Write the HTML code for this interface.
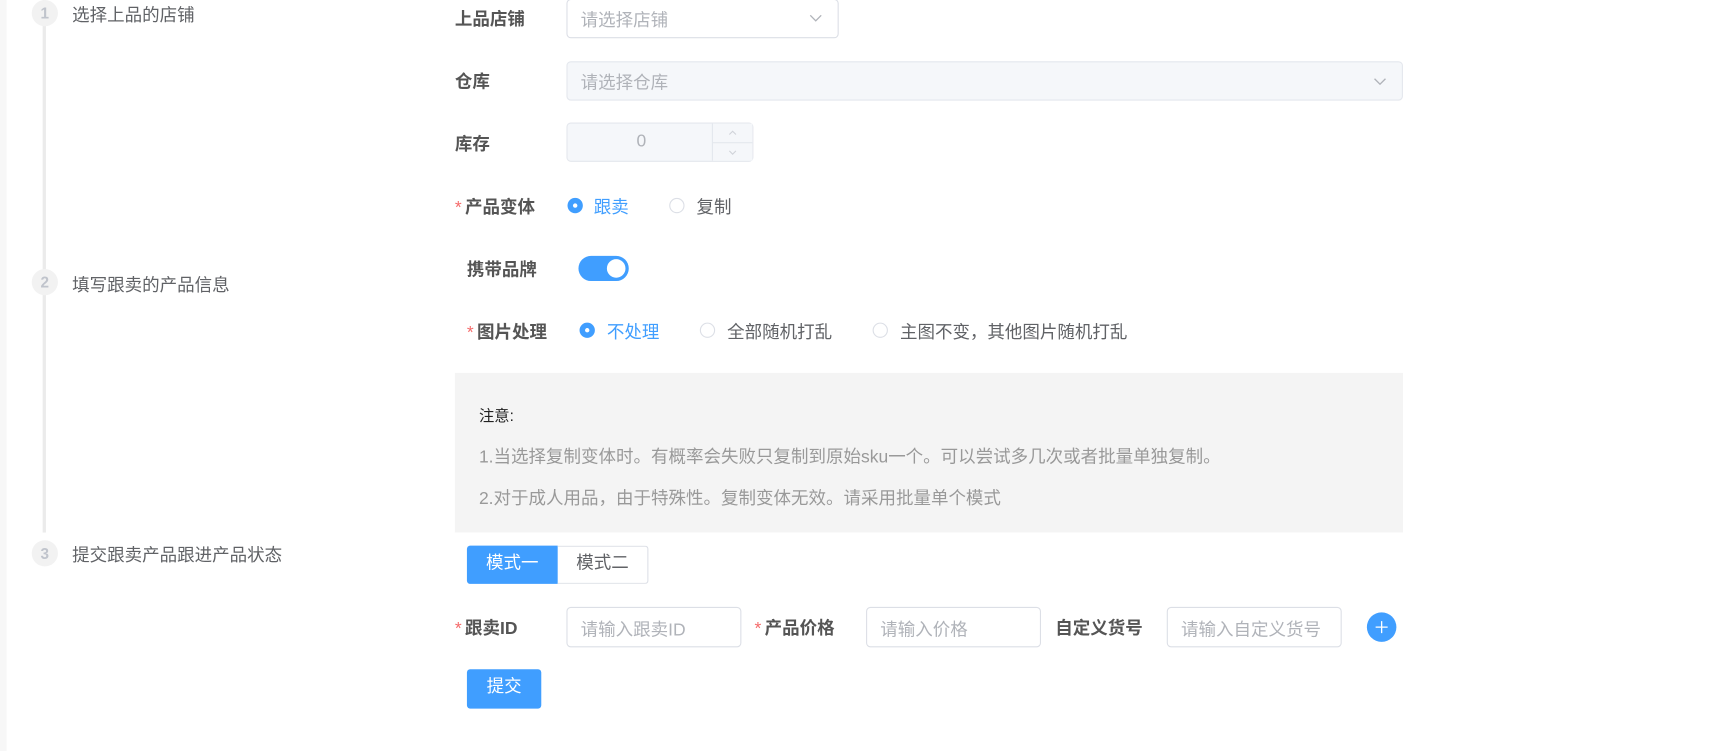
<!DOCTYPE html>
<html><head><meta charset="utf-8"><style>
html,body{margin:0;padding:0;background:#fff;width:1714px;height:751px;overflow:hidden}
#w{position:absolute;left:0;top:0;width:1568px;height:687px;transform:scale(1.0935);transform-origin:0 0;font-family:"Liberation Sans","Noto Sans CJK SC",sans-serif;font-size:16px;color:#606266}
.a{position:absolute;white-space:nowrap;margin-top:-3px}
.lbl{font-weight:bold;color:#555}
.st{color:#f56c6c;font-weight:normal;margin-right:3px}
.in{position:absolute;border:1px solid #dcdfe6;border-radius:4px;box-sizing:border-box;background:#fff;color:#b0b3b9;padding-left:12px;display:flex;align-items:center}
.dis{background:#f5f7fa;border-color:#e4e7ed}
.c{position:absolute;width:24px;height:24px;border-radius:50%;background:#f2f2f2;color:#c0c4cc;font-size:14px;text-align:center;line-height:24px;font-weight:bold}
.r{position:absolute;width:14px;height:14px;border-radius:50%;box-sizing:border-box;border:1px solid #dcdfe6;background:#fff}
.r.on{border:none;background:#409eff}
.r.on::after{content:"";position:absolute;left:5px;top:5px;width:4px;height:4px;border-radius:50%;background:#fff}
.blue{color:#409eff}
</style></head><body><div id="w">
<div style="position:absolute;left:0;top:0;width:6px;height:687px;background:#f7f7f7"></div>
<div style="position:absolute;left:39px;top:0;width:3px;height:487px;background:#ebebeb"></div>
<div class="c" style="left:29px;top:0">1</div>
<div class="c" style="left:29px;top:246px">2</div>
<div class="c" style="left:29px;top:494px">3</div>
<div class="a" style="left:66px;top:3px">选择上品的店铺</div>
<div class="a" style="left:66px;top:250px">填写跟卖的产品信息</div>
<div class="a" style="left:66px;top:497px">提交跟卖产品跟进产品状态</div>

<div class="a lbl" style="left:416px;top:7px">上品店铺</div>
<div class="in" style="left:518px;top:-1px;width:249px;height:36px">请选择店铺<svg style="position:absolute;right:14px;top:13px" width="12" height="8"><path d="M1 1l5 5 5-5" fill="none" stroke="#b0b3b9" stroke-width="1.2"/></svg></div>
<div class="a lbl" style="left:416px;top:64px">仓库</div>
<div class="in dis" style="left:518px;top:56px;width:765px;height:36px">请选择仓库<svg style="position:absolute;right:14px;top:14px" width="12" height="8"><path d="M1 1l5 5 5-5" fill="none" stroke="#b0b3b9" stroke-width="1.2"/></svg></div>
<div class="a lbl" style="left:416px;top:121px">库存</div>
<div class="in dis" style="left:518px;top:112px;width:171px;height:36px;padding:0;justify-content:center"><span style="margin-right:34px;color:#b0b3b9">0</span>
<div style="position:absolute;right:0;top:0;width:36px;height:34px;border-left:1px solid #e4e7ed;background:#f5f7fa"><div style="height:17px;border-bottom:1px solid #e4e7ed"><svg style="position:absolute;left:14px;top:6px" width="8" height="5"><path d="M1 4l3-3 3 3" fill="none" stroke="#d0d3d9"/></svg></div><svg style="position:absolute;left:14px;top:24px" width="8" height="5"><path d="M1 1l3 3 3-3" fill="none" stroke="#d0d3d9"/></svg></div></div>
<div class="a lbl" style="left:416px;top:179px"><span class="st">*</span>产品变体</div>
<div class="r on" style="left:519px;top:181px"></div><div class="a blue" style="left:543px;top:179px">跟卖</div>
<div class="r" style="left:612px;top:181px"></div><div class="a" style="left:637px;top:179px">复制</div>
<div class="a lbl" style="left:427px;top:236px">携带品牌</div>
<div style="position:absolute;left:529px;top:234px;width:46px;height:23px;border-radius:12px;background:#409eff"><div style="position:absolute;right:3px;top:3px;width:17px;height:17px;border-radius:50%;background:#fff"></div></div>
<div class="a lbl" style="left:427px;top:293px"><span class="st">*</span>图片处理</div>
<div class="r on" style="left:530px;top:295px"></div><div class="a blue" style="left:555px;top:293px">不处理</div>
<div class="r" style="left:640px;top:295px"></div><div class="a" style="left:665px;top:293px">全部随机打乱</div>
<div class="r" style="left:798px;top:295px"></div><div class="a" style="left:823px;top:293px">主图不变，其他图片随机打乱</div>

<div style="position:absolute;left:416px;top:341px;width:867px;height:146px;background:#f4f4f4"></div>
<div class="a" style="left:438px;top:373px;color:#222;font-size:14px">注意:</div>
<div class="a" style="left:438px;top:407px;color:#999">1.当选择复制变体时。有概率会失败只复制到原始sku一个。可以尝试多几次或者批量单独复制。</div>
<div class="a" style="left:438px;top:445px;color:#999">2.对于成人用品，由于特殊性。复制变体无效。请采用批量单个模式</div>

<div style="position:absolute;left:427px;top:499px;width:83px;height:35px;background:#409eff;color:#fff;border-radius:3px 0 0 3px;text-align:center;line-height:33px">模式一</div>
<div style="position:absolute;left:510px;top:499px;width:83px;height:35px;box-sizing:border-box;border:1px solid #dcdfe6;border-left:none;border-radius:0 3px 3px 0;text-align:center;line-height:31px">模式二</div>

<div class="a lbl" style="left:416px;top:564px"><span class="st">*</span>跟卖ID</div>
<div class="in" style="left:518px;top:555px;width:160px;height:37px">请输入跟卖ID</div>
<div class="a lbl" style="left:690px;top:564px"><span class="st">*</span>产品价格</div>
<div class="in" style="left:792px;top:555px;width:160px;height:37px">请输入价格</div>
<div class="a lbl" style="left:965px;top:564px">自定义货号</div>
<div class="in" style="left:1067px;top:555px;width:160px;height:37px">请输入自定义货号</div>
<div style="position:absolute;left:1250px;top:560px;width:27px;height:27px;border-radius:50%;background:#409eff"><svg width="27" height="27"><path d="M13.5 8v11M8 13.5h11" stroke="#fff" stroke-width="1.2"/></svg></div>
<div style="position:absolute;left:427px;top:612px;width:68px;height:36px;background:#409eff;color:#fff;border-radius:3px;text-align:center;line-height:34px">提交</div>
</div></body></html>
